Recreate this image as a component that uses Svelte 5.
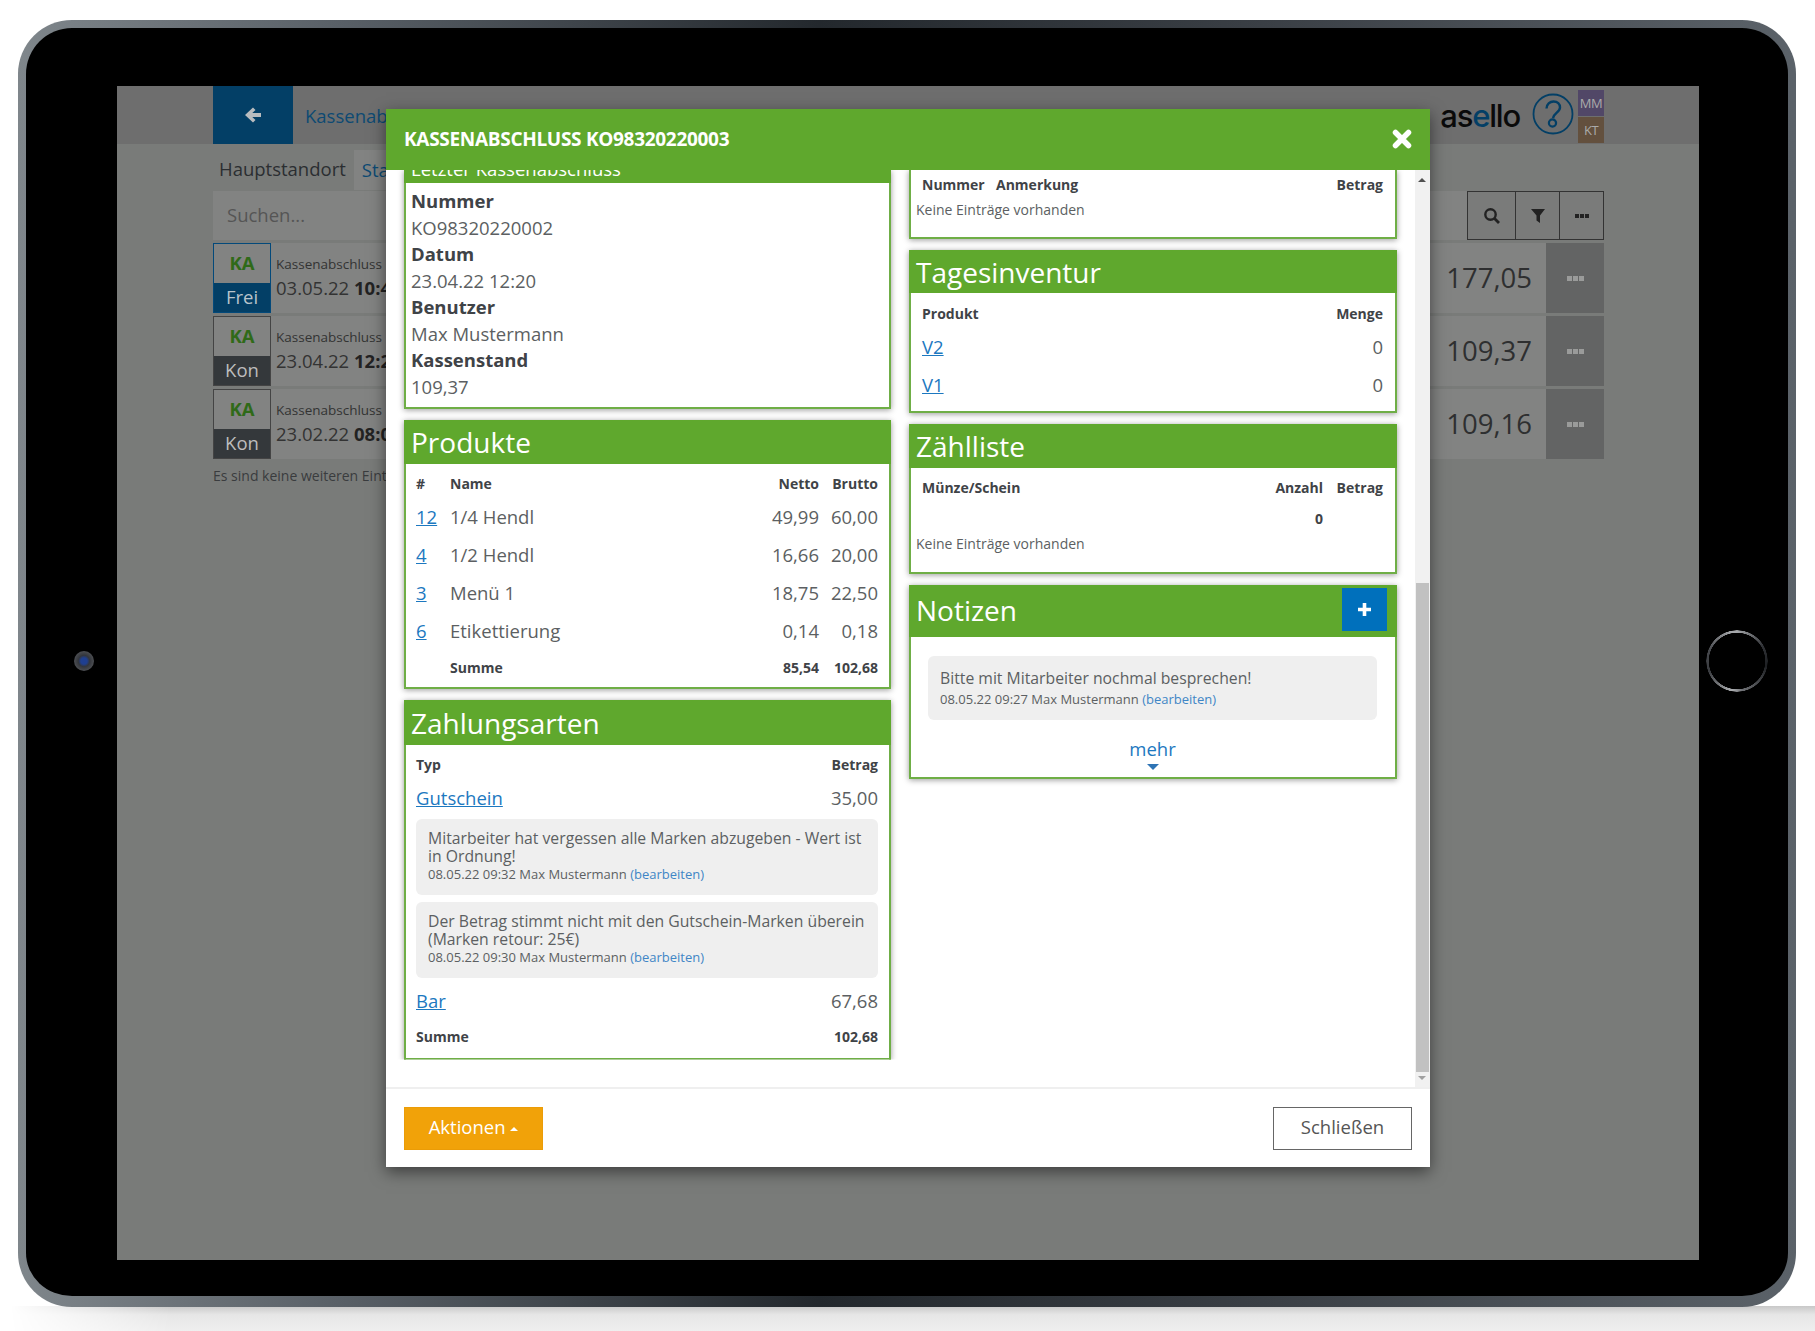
<script>
  const produkte = [
    ['12', '1/4 Hendl', '49,99', '60,00'],
    ['4', '1/2 Hendl', '16,66', '20,00'],
    ['3', 'Menü 1', '18,75', '22,50'],
    ['6', 'Etikettierung', '0,14', '0,18']
  ];
  const rows = [
    { s: 'Frei', d: '03.05.22', t: '10:45', v: '177,05', on: true },
    { s: 'Kon', d: '23.04.22', t: '12:20', v: '109,37' },
    { s: 'Kon', d: '23.02.22', t: '08:00', v: '109,16' }
  ];
</script>

<div class="page">
  <div class="shadow"></div>
  <div class="tablet">
    <div class="camera"></div>
    <div class="home"></div>
    <div class="screen">
      <div class="topbar">
        <div class="back">
          <svg width="18" height="18" viewBox="0 0 18 18"><path d="M1 9 9 1.500l2.500 2.500-3.200 3H17v4H8.300l3.200 3L9 16.500Z" fill="#b9bcbf"/></svg>
        </div>
        <div class="crumb">Kassenabschluss Details</div>
        <div class="spacer"></div>
        <div class="logo">as<span>e</span>llo</div>
        <svg class="help" width="42" height="42" viewBox="0 0 42 42"><circle cx="21" cy="21" r="19.500" fill="none" stroke="#033f66" stroke-width="1.800"/><path d="M14.500 15.500C14.500 11 18 8.500 21.500 8.500 25.500 8.500 28 11 28 14.500 28 19 22 20 21 25" fill="none" stroke="#033f66" stroke-width="2.400"/><circle cx="20.500" cy="30" r="3.600" fill="none" stroke="#033f66" stroke-width="2.200"/></svg>
        <div class="avatars"><div class="mm">MM</div><div class="kt">KT</div></div>
      </div>
      <div class="content">
        <div class="tabs"><span class="tab">Hauptstandort</span><span class="tab active">Standort 2</span></div>
        <div class="searchrow">
          <div class="search">Suchen...</div>
          <div class="tools">
            <div class="tool t1"><svg width="18" height="18" viewBox="0 0 18 18"><circle cx="7.500" cy="7.500" r="5.200" fill="none" stroke="#222" stroke-width="2.400"/><path d="m11 11 5 5" stroke="#222" stroke-width="2.800"/></svg></div>
            <div class="tool t2"><svg width="16" height="16" viewBox="0 0 16 16"><path d="M1 1h14L10 7.500V15L6.500 12.500V7.500Z" fill="#222"/></svg></div>
            <div class="tool t3"><span class="dots dark"><i></i><i></i><i></i></span></div>
          </div>
        </div>
        {#each rows as r}
          <div class="row">
            <div class="badge" class:on={r.on}>
              <div class="ka">KA</div>
              <div class="st">{r.s}</div>
            </div>
            <div class="info">
              <div class="k">Kassenabschluss</div>
              <div class="d">{r.d} <b>{r.t}</b></div>
            </div>
            <div class="val">{r.v}</div>
            <div class="more"><span class="dots"><i></i><i></i><i></i></span></div>
          </div>
        {/each}
        <div class="noentries">Es sind keine weiteren Einträge vorhanden</div>
      </div>
    </div>

    <div class="modal">
      <div class="mhead">
        <span>KASSENABSCHLUSS KO98320220003</span>
        <svg width="20" height="20" viewBox="0 0 20 20"><path d="M3.500 3.500 16.500 16.500M16.500 3.500 3.500 16.500" stroke="#fff" stroke-width="5.500" stroke-linecap="round"/></svg>
      </div>
      <div class="mbody">
        <div class="columns">
          <div class="col">
            <div class="panel">
              <div class="ph cut"><span>Letzter Kassenabschluss</span></div>
              <div class="facts">
                <b>Nummer</b><span>KO98320220002</span>
                <b>Datum</b><span>23.04.22 12:20</span>
                <b>Benutzer</b><span>Max Mustermann</span>
                <b>Kassenstand</b><span>109,37</span>
              </div>
            </div>
            <div class="panel p-prod">
              <div class="ph">Produkte</div>
              <div class="pb">
                <div class="tr th prod"><span>#</span><span>Name</span><span class="r">Netto</span><span class="r">Brutto</span></div>
                {#each produkte as p}
                  <div class="tr prod big"><a href="#a">{p[0]}</a><span>{p[1]}</span><span class="r">{p[2]}</span><span class="r">{p[3]}</span></div>
                {/each}
                <div class="tr th prod sum"><span></span><span>Summe</span><span class="r">85,54</span><span class="r">102,68</span></div>
              </div>
            </div>
            <div class="panel p-zahl">
              <div class="ph">Zahlungsarten</div>
              <div class="pb">
                <div class="tr th two"><span>Typ</span><span class="r">Betrag</span></div>
                <div class="tr two big"><a href="#a">Gutschein</a><span class="r">35,00</span></div>
                <div class="note first">
                  <p>Mitarbeiter hat vergessen alle Marken abzugeben - Wert ist in Ordnung!</p>
                  <small>08.05.22 09:32 Max Mustermann <em>(bearbeiten)</em></small>
                </div>
                <div class="note">
                  <p>Der Betrag stimmt nicht mit den Gutschein-Marken überein (Marken retour: 25€)</p>
                  <small>08.05.22 09:30 Max Mustermann <em>(bearbeiten)</em></small>
                </div>
                <div class="tr two big bar"><a href="#a">Bar</a><span class="r">67,68</span></div>
                <div class="tr th two sum"><span>Summe</span><span class="r">102,68</span></div>
              </div>
            </div>
          </div>
          <div class="col">
            <div class="panel p-top">
              <div class="pb">
                <div class="tr th anm"><span>Nummer</span><span>Anmerkung</span><span class="r">Betrag</span></div>
                <div class="empty">Keine Einträge vorhanden</div>
              </div>
            </div>
            <div class="panel p-tag">
              <div class="ph">Tagesinventur</div>
              <div class="pb">
                <div class="tr th two"><span>Produkt</span><span class="r">Menge</span></div>
                <div class="tr two big"><a href="#a">V2</a><span class="r">0</span></div>
                <div class="tr two big"><a href="#a">V1</a><span class="r">0</span></div>
              </div>
            </div>
            <div class="panel p-zaehl">
              <div class="ph">Zählliste</div>
              <div class="pb">
                <div class="tr th three"><span>Münze/Schein</span><span class="r">Anzahl</span><span class="r">Betrag</span></div>
                <div class="tr th three zero"><span></span><span class="r">0</span><span></span></div>
                <div class="empty">Keine Einträge vorhanden</div>
              </div>
            </div>
            <div class="panel p-not">
              <div class="ph nh">Notizen<div class="plus"><svg width="15" height="15" viewBox="0 0 15 15"><path d="M7.500 1v13M1 7.500h13" stroke="#fff" stroke-width="3.600"/></svg></div></div>
              <div class="pb">
                <div class="note n1">
                  <p>Bitte mit Mitarbeiter nochmal besprechen!</p>
                  <small>08.05.22 09:27 Max Mustermann <em>(bearbeiten)</em></small>
                </div>
                <div class="mehr">mehr<i></i></div>
              </div>
            </div>
          </div>
        </div>
        <div class="scrollbar"><i class="up"></i><div class="thumb"></div><i class="down"></i></div>
      </div>
      <div class="mfoot">
        <button class="akt">Aktionen <i></i></button>
        <button class="close">Schließen</button>
      </div>
    </div>
  </div>
</div>

<style>
  :global(body) { margin: 0; background: #fff; }
  .page { position: relative; width: 1815px; height: 1331px; overflow: hidden; background: #fff; font-family: "Open Sans", "Liberation Sans", sans-serif; color: #4b4f53; }
  .shadow { position: absolute; left: 0; top: 1306px; width: 1815px; height: 25px; background: linear-gradient(#c8c8c8, #e6e6e6 35%, #efefef); -webkit-mask-image: linear-gradient(90deg, transparent 10px, #000 170px); mask-image: linear-gradient(90deg, transparent 10px, #000 170px); }
  .tablet { position: absolute; left: 18px; top: 20px; width: 1778px; height: 1287px; box-sizing: border-box; border-radius: 54px; border: 8px solid transparent; border-bottom-width: 11px; background: linear-gradient(#000, #000) padding-box, linear-gradient(90deg, #7f868b, #596067 18%, #23282d 45%, #3a3f45 70%, #5b6269) border-box; }
  .camera { position: absolute; left: 48px; top: 623px; width: 20px; height: 20px; border-radius: 50%; background: radial-gradient(circle, #1f3f90 0 22%, #33363c 40%, #4c4e52 70%, #242527 100%); }
  .home { position: absolute; left: 1680px; top: 602px; width: 62px; height: 62px; border-radius: 50%; filter: blur(.5px); background: conic-gradient(from 0deg, #a5a7aa 0deg, #303236 60deg, #1e2023 100deg, #6f7175 170deg, #adafb2 190deg, #3a3c40 250deg, #45474b 290deg, #a5a7aa 350deg); -webkit-mask: radial-gradient(circle, transparent 0 28px, #000 28.500px 30.500px, transparent 31px); mask: radial-gradient(circle, transparent 0 28px, #000 28.500px 30.500px, transparent 31px); }
  .screen { position: absolute; left: 91px; top: 58px; width: 1582px; height: 1174px; background: #797b79; overflow: hidden; }
  .topbar { height: 58px; background: #6e6e6e; display: flex; align-items: center; padding-left: 96px; padding-right: 95px; }
  .back { width: 80px; height: 58px; background: #033f66; display: flex; align-items: center; justify-content: center; }
  .crumb { margin-left: 12px; font-size: 18.500px; color: #0d4a73; white-space: nowrap; }
  .spacer { flex: 1; }
  .logo { font-family: "Inter", "Open Sans", sans-serif; font-size: 31px; letter-spacing: -1.200px; color: #0a0a0a; font-weight: 500; margin-right: 12px; }
  .logo span { color: #033f66; }
  .help { margin-right: 4px; margin-top: -3px; }
  .avatars { display: flex; flex-direction: column; gap: 1px; margin-top: 2px; }
  .mm, .kt { width: 26px; height: 26px; font-size: 13px; display: flex; align-items: center; justify-content: center; letter-spacing: -0.500px; }
  .mm { background: #514767; color: #aaa; }
  .kt { background: #63503e; color: #aaa; }
  .content { padding: 0 95px 0 96px; }
  .tabs { height: 46px; display: flex; align-items: center; font-size: 18.500px; }
  .tab { padding: 0 6px; color: #2b2e31; white-space: nowrap; margin-top: 3px; }
  .tab.active { margin-left: 2px; background: #828382; color: #0d4a73; height: 40px; line-height: 40px; padding: 0 8px; align-self: flex-end; margin-top: 0; }
  .searchrow { height: 49px; background: #828382; display: flex; justify-content: space-between; align-items: center; margin-bottom: 3px; margin-top: 1px; }
  .search { padding-left: 14px; font-size: 18.500px; color: #555; margin-top: -2px; }
  .tools { display: flex; height: 49px; box-sizing: border-box; border: 1px solid #333; background: #7a7b7a; }
  .tool { display: flex; align-items: center; justify-content: center; border-left: 1px solid #333; }
  .t1 { width: 47px; border-left: 0; } .t2 { width: 43px; } .t3 { width: 43px; }
  .dots { display: inline-flex; gap: 1px; }
  .dots i { display: block; width: 5px; height: 5px; background: #9a9b9a; }
  .dots.dark i { width: 4px; height: 4px; background: #222; }
  .row { display: flex; height: 70px; margin-bottom: 3px; background: #828382; }
  .badge { width: 58px; height: 70px; flex: none; box-sizing: border-box; border: 1px solid #444; display: flex; flex-direction: column; text-align: center; background: #828382; }
  .badge.on { border-color: #03497a; }
  .ka { height: 39px; line-height: 37px; color: #2f6a18; font-size: 18.500px; font-weight: 700; }
  .st { flex: 1; background: #34383b; color: #bdbdbd; font-size: 18.500px; line-height: 27px; }
  .on .st { background: #033f66; color: #b9c4cc; }
  .info { padding: 11px 6px 0 5px; flex: 1; white-space: nowrap; overflow: hidden; }
  .k { font-size: 13.500px; color: #333; line-height: 21px; }
  .d { font-size: 18.500px; color: #333; line-height: 26px; }
  .d b { color: #222; }
  .val { font-size: 27.500px; color: #2e2f30; align-self: center; margin-right: 14px; margin-top: -2px; }
  .more { width: 58px; background: #636464; display: flex; align-items: center; justify-content: center; }
  .noentries { font-size: 14px; color: #3a3c3e; margin-top: 7px; }

  .modal { position: absolute; left: 360px; top: 81px; width: 1044px; height: 1058px; background: #fff; box-shadow: 0 5px 15px rgba(0,0,0,.5); display: flex; flex-direction: column; }
  .mhead { height: 61px; flex: none; background: #5fa82d; color: #fff; display: flex; align-items: center; justify-content: space-between; padding: 0 18px; font-size: 19px; font-weight: 700; letter-spacing: -0.300px; position: relative; z-index: 2; }
  .mhead span { margin-top: -2px; }
  .mhead svg { margin-top: -1px; }
  .mbody { flex: 1; position: relative; overflow: hidden; min-height: 0; }
  .columns { display: flex; gap: 18px; padding-left: 18px; align-items: flex-start; clip-path: inset(-20px -20px 0 -20px); }
  .col { width: 488px; display: flex; flex-direction: column; gap: 11px; flex: none; }
  .col:first-child { width: 487px; }
  .panel { box-sizing: border-box; border: 2px solid #6fae46; border-top: 0; background: #fff; box-shadow: 0 1px 6px rgba(0,0,0,.4); }
  .ph { height: 43px; background: #5fa82d; color: #fff; font-size: 28px; margin: 0 -2px; padding: 0 7px; line-height: 45px; position: relative; }
  .p-prod .ph, .p-zaehl .ph { height: 44px; }
  .p-zahl .ph { height: 45px; line-height: 46px; }
  .cut { height: 13px; line-height: 13px; overflow: hidden; font-size: 18.500px; }
  .cut span { display: block; margin-top: -8px; }
  .facts { display: flex; flex-direction: column; padding: 5px 5px 0; font-size: 18.500px; height: 223.500px; box-sizing: border-box; }
  .facts b, .facts span { display: block; height: 26.500px; line-height: 26.500px; }
  .facts span { color: #5c5f62; }
  .facts b { color: #3f4347; }
  .pb { padding: 0 12px 0 11px; }
  .col:first-child .pb { padding: 0 11px 0 10px; }
  .tr { display: grid; align-items: center; }
  .r { text-align: right; }
  .th { font-size: 14px; font-weight: 700; color: #3f4347; height: 34px; padding-top: 6px; box-sizing: border-box; }
  .big { font-size: 18.500px; height: 38px; color: #5c5f62; }
  .big a, .mehr { color: #1c78c0; }
  .big a { text-decoration: underline; width: fit-content; }
  .prod { grid-template-columns: 34px 1fr 80px 59px; }
  .two { grid-template-columns: 1fr auto; }
  .anm { grid-template-columns: 74px 1fr auto; }
  .three { grid-template-columns: 1fr 70px 60px; }
  .th.sum { height: 36px; padding-top: 0; }
  .p-prod { height: 269px; }
  .p-zahl { height: 360px; }
  .note { background: #efefef; border-radius: 6px; padding: 10px 11px 12px 12px; margin-bottom: 7px; font-size: 15.750px; line-height: 18px; color: #5c5f62; }
  .note.first { margin-top: 2px; }
  .note p { margin: 0; }
  .note small { display: block; font-size: 13px; line-height: 18px; }
  .note em { font-style: normal; color: #3f86c6; }
  .bar { height: 36px; margin-top: -2px; }
  .p-top { height: 69px; }
  .p-top .th { height: 26px; padding-top: 2px; }
  .p-top .empty { line-height: 28px; }
  .empty { font-size: 14px; margin-left: -6px; color: #5c5f62; line-height: 26px; }
  .p-tag { height: 162.500px; }
  .p-zaehl { height: 150.500px; }
  .p-zaehl .zero { height: 22px; margin-top: 6px; padding-top: 0; }
  .p-zaehl .empty { margin-top: 1px; }
  .p-not { height: 194px; }
  .nh { height: 52px; line-height: 51px; display: flex; justify-content: space-between; }
  .plus { width: 45px; height: 43px; background: #0070bc; margin: 3px 3px 0 0; display: flex; align-items: center; justify-content: center; }
  .n1 { margin: 19px 6px 0; padding: 13px 12px 0; height: 64px; box-sizing: border-box; }
  .n1 small { margin-top: 3px; }
  .mehr { text-align: center; font-size: 18.500px; margin-top: 17px; line-height: 24px; }
  .mehr i { display: block; margin: 3px auto 0; width: 0; height: 0; border: 6px solid transparent; border-top-color: #2f74b5; border-bottom: 0; }
  .scrollbar { position: absolute; right: 0; top: 0; bottom: 0; width: 15px; background: #f1f1f1; }
  .thumb { position: absolute; left: 1px; width: 13px; top: 413px; bottom: 15px; background: #c1c1c1; }
  .up, .down { position: absolute; left: 3px; width: 0; height: 0; border: 4px solid transparent; }
  .up { top: 8px; border-bottom-color: #505050; border-top: 0; }
  .down { bottom: 7px; border-top-color: #a0a0a0; border-bottom: 0; }
  .mfoot { height: 80px; flex: none; border-top: 2px solid #efefef; box-sizing: border-box; display: flex; justify-content: space-between; align-items: center; padding: 0 18px; }
  button { font-family: inherit; font-size: 18.500px; height: 43px; box-sizing: border-box; padding: 0 0 3px; }
  .akt { width: 139px; background: #f1a209; border: 1px solid #eb9c07; color: #fff; }
  .akt i { display: inline-block; width: 0; height: 0; border: 4.500px solid transparent; border-bottom-color: #fff; border-top: 0; vertical-align: 3px; }
  .close { width: 139px; background: #fff; border: 1px solid #666; color: #555; }
</style>
